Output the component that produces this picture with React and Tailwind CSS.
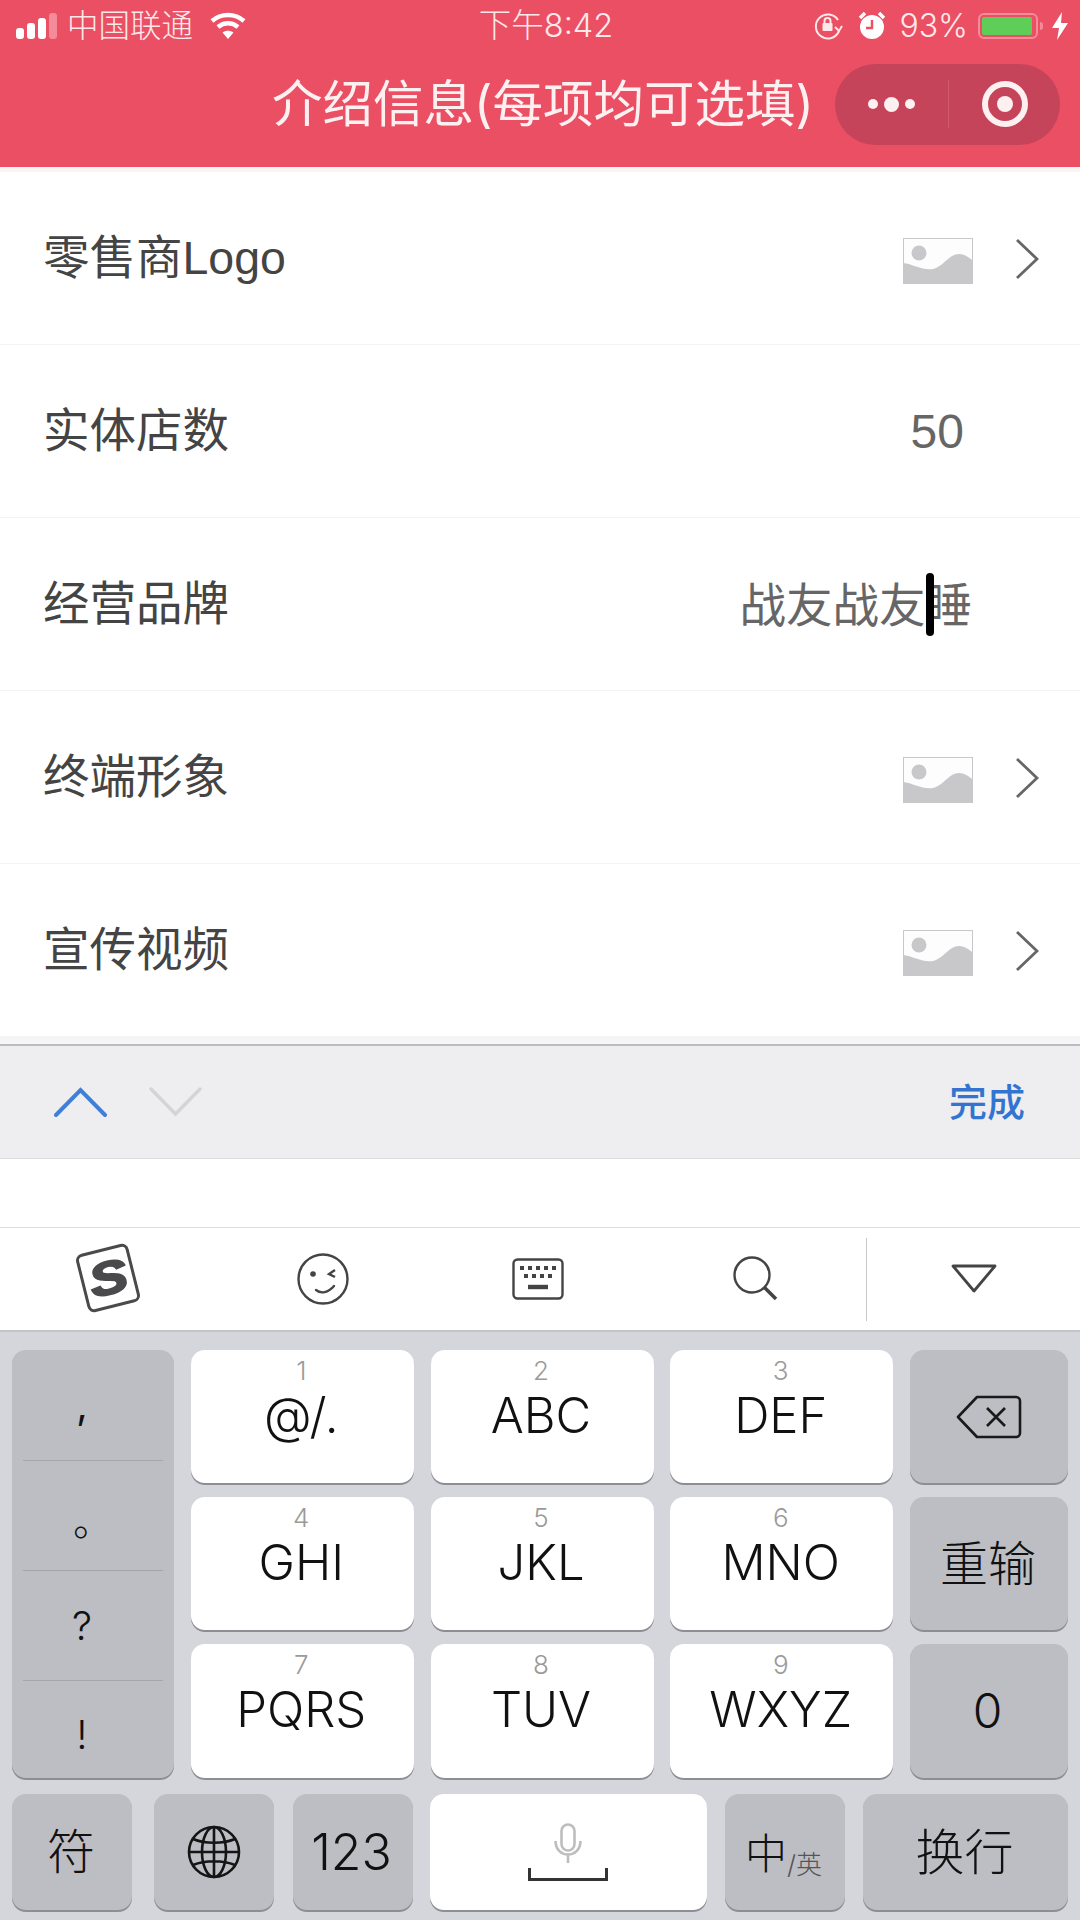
const rows = [
  { label: '零售商Logo', kind: 'image' },
  { label: '实体店数', kind: 'count' },
  { label: '经营品牌', kind: 'brand' },
  { label: '终端形象', kind: 'image' },
  { label: '宣传视频', kind: 'image' },
]

const keys = [
  ['1', '@/.'], ['2', 'ABC'], ['3', 'DEF'],
  ['4', 'GHI'], ['5', 'JKL'], ['6', 'MNO'],
  ['7', 'PQRS'], ['8', 'TUV'], ['9', 'WXYZ'],
]

const grayKey = 'rounded-[14px] bg-[#bdbdc4] shadow-[0_2px_0_#8d8d94] text-[#111]'
const whiteKey = 'rounded-[14px] bg-white shadow-[0_2px_0_#8d8d94] text-[#111]'

function PlaceholderIcon() {
  return (
    <svg className="mt-[5px]" width="70" height="46" viewBox="0 0 70 46">
      <rect x="0.5" y="0.5" width="69" height="45" fill="#fdfdfd" stroke="#c8c8ca" />
      <circle cx="16" cy="15" r="7.5" fill="#c8c8ca" />
      <path d="M0 25 C10 26 20 33 30 31 C40 29 46 16 56 16 C62 16 67 20 70 23 L70 46 L0 46 Z" fill="#c8c8ca" />
    </svg>
  )
}

function Chevron() {
  return (
    <svg className="mt-[2px]" width="24" height="42" viewBox="0 0 24 42" fill="none">
      <path d="M2 2 L22 21 L2 40" stroke="#666" strokeWidth="2.8" />
    </svg>
  )
}

function Row({ label, kind }) {
  return (
    <div className="h-[173px] flex items-center justify-between pl-[43px] border-b border-[#f4f4f7] last:border-b-0">
      <span className="text-[46.5px] text-[#444] font-normal leading-none font-['Liberation_Sans','Noto_Sans_CJK_SC',sans-serif]">{label}</span>
      {kind === 'image' && (
        <div className="flex items-center gap-[42px] pr-[41px]">
          <PlaceholderIcon />
          <Chevron />
        </div>
      )}
      {kind === 'count' && <span className="pr-[116px] pt-[2px] text-[48px] text-[#666] font-['Liberation_Sans',sans-serif] leading-none">50</span>}
      {kind === 'brand' && (
        <span className="relative pr-[108px] pt-[2px] text-[46.5px] text-[#666] font-normal leading-none">
          战友战友睡
          <span className="absolute left-[186px] top-[-7px] w-[8px] h-[63px] rounded-full bg-black" />
        </span>
      )}
    </div>
  )
}

function StatusBar() {
  return (
    <div className="h-[52px] grid grid-cols-[1fr_auto_1fr] items-center pl-[16px] pr-[12px] text-[#fde8ea]">
      <div className="flex items-center">
        <svg width="43" height="28" viewBox="0 0 43 28" fill="#fff">
          <rect x="0" y="16" width="8" height="11" rx="3" />
          <rect x="11" y="11" width="8" height="16" rx="3" />
          <rect x="22" y="6" width="8" height="21" rx="3" />
          <rect x="33" y="1" width="8" height="26" rx="3" fill="#f58b98" />
        </svg>
        <span className="ml-[8px] text-[31.5px] font-light leading-none">中国联通</span>
        <svg className="ml-[17px]" width="36" height="28" viewBox="0 0 36 28" fill="none" stroke="#fff" strokeWidth="4.5">
          <path d="M2 9 C11 1 25 1 34 9" />
          <path d="M8 15 C14 10 22 10 28 15" />
          <path d="M18 27 L12.5 20.5 C15.5 18 20.5 18 23.5 20.5 Z" fill="#fff" stroke="none" />
        </svg>
      </div>
      <span className="text-[32.5px] font-light leading-none pl-[8px]">下午8:42</span>
      <div className="flex items-center justify-end">
        <svg width="30" height="30" viewBox="0 0 30 30" fill="none" stroke="#fde8ea" strokeWidth="2">
          <path d="M25 9 A12 12 0 1 0 26 20" />
          <path d="M22 16 L26 20 L29 15" />
          <rect x="9.5" y="12" width="10" height="8" rx="1" fill="#fde8ea" stroke="none" />
          <path d="M11.5 12 V10 A3 3 0 0 1 17.5 10 V12" />
        </svg>
        <svg className="ml-[15px]" width="28" height="30" viewBox="0 0 28 30">
          <circle cx="14" cy="16" r="12" fill="#fff" />
          <path d="M14 9 V17 H8" fill="none" stroke="#ea4f64" strokeWidth="2.4" />
          <path d="M2 7 L7 2 M26 7 L21 2" stroke="#fff" strokeWidth="3.4" />
        </svg>
        <span className="ml-[13px] text-[32px] font-light leading-none">93%</span>
        <div className="ml-[10px] w-[60px] h-[26px] rounded-[6px] border-2 border-[#f58b98] p-[2px]">
          <div className="w-[50px] h-full rounded-[2px] bg-[#5fce58]" />
        </div>
        <div className="w-[3px] h-[8px] ml-[2px] rounded-r-sm bg-[#f58b98]" />
        <svg className="ml-[9px]" width="16" height="28" viewBox="0 0 16 28" fill="#fff">
          <path d="M10 0 L0 16 H7 L5 28 L16 11 H9 Z" />
        </svg>
      </div>
    </div>
  )
}

function Header() {
  return (
    <div className="h-[167px] bg-[#ea4f64]">
      <StatusBar />
      <div className="h-[104px] flex items-center">
        <span className="ml-[272px] text-[50.5px] leading-none text-[#fdf0f1] font-normal whitespace-nowrap">介绍信息(每项均可选填)</span>
        <div className="ml-auto mr-[20px] w-[225px] h-[81px] rounded-full bg-[#c6445a] flex items-center">
          <div className="w-[113px] flex items-center justify-center gap-[6px]">
            <span className="w-[10px] h-[10px] rounded-full bg-[#fdf0f1]" />
            <span className="w-[15px] h-[15px] rounded-full bg-[#fdf0f1]" />
            <span className="w-[10px] h-[10px] rounded-full bg-[#fdf0f1]" />
          </div>
          <div className="w-px h-[48px] bg-[#d25a6e]" />
          <div className="flex-1 flex items-center justify-center">
            <span className="w-[46px] h-[46px] rounded-full border-[6px] border-[#fdf0f1] flex items-center justify-center">
              <span className="w-[16px] h-[16px] rounded-full bg-[#fdf0f1]" />
            </span>
          </div>
        </div>
      </div>
    </div>
  )
}

function Toolbar() {
  return (
    <div className="h-[115px] bg-[#eeeef0] border-t-2 border-[#bcbcbe] border-b border-b-[#dcdce0] flex items-center pl-[54px] pr-[55px]">
      <svg width="53" height="30" viewBox="0 0 53 30" fill="none">
        <path d="M2 28 L26.5 3 L51 28" stroke="#3f7fd6" strokeWidth="4" strokeLinecap="round" />
      </svg>
      <svg className="ml-[42px]" width="53" height="30" viewBox="0 0 53 30" fill="none">
        <path d="M2 2 L26.5 27 L51 2" stroke="#d4d4d6" strokeWidth="3.4" strokeLinecap="round" />
      </svg>
      <span className="ml-auto text-[38px] leading-none font-medium text-[#3274d0]">完成</span>
    </div>
  )
}

function CandidateBar() {
  return (
    <div className="h-[105px] bg-white border-t border-[#dedee0] border-b-2 border-b-[#c4c4c8] flex items-center">
      <div className="w-[216px] flex justify-center -translate-y-px">
        <div className="w-[54px] h-[60px] -rotate-[14deg] rounded-[7px] border-[3px] border-[#4a4a4c] flex items-center justify-center overflow-hidden">
          <span className="text-[46px] leading-none font-bold italic text-[#4a4a4c] font-['Liberation_Sans',sans-serif] scale-x-125 [-webkit-text-stroke:2px_#4a4a4c]">S</span>
        </div>
      </div>
      <div className="w-[214px] flex justify-center">
        <svg width="52" height="52" viewBox="0 0 52 52" fill="none" stroke="#444" strokeWidth="2.4">
          <circle cx="26" cy="26" r="24.5" />
          <circle cx="16" cy="21" r="2.8" fill="#444" stroke="none" />
          <path d="M38 17 L32 21 L38 24" />
          <path d="M19 37 C24 41 31 40 37 33" strokeLinecap="round" />
        </svg>
      </div>
      <div className="w-[216px] flex justify-center">
        <svg width="52" height="42" viewBox="0 0 52 42" fill="none">
          <rect x="1.5" y="1.5" width="49" height="39" rx="4" stroke="#444" strokeWidth="2.4" />
          <path d="M8 10 H12 M16 10 H20 M24 10 H28 M32 10 H36 M40 10 H44 M12 18 H16 M20 18 H24 M28 18 H32 M36 18 H40" stroke="#444" strokeWidth="4" />
          <path d="M16 29 H36" stroke="#444" strokeWidth="4.4" />
        </svg>
      </div>
      <div className="w-[220px] flex justify-center">
        <svg width="46" height="46" viewBox="0 0 46 46" fill="none" stroke="#444">
          <circle cx="19" cy="19" r="17.5" strokeWidth="2.4" />
          <path d="M31 31 L43 43" strokeWidth="3.6" />
        </svg>
      </div>
      <div className="self-center w-px h-[83px] bg-[#c8c8ca]" />
      <div className="flex-1 flex justify-center">
        <svg width="46" height="30" viewBox="0 0 46 30" fill="none">
          <path d="M2 2 H44 L23 27 Z" stroke="#444" strokeWidth="2.8" strokeLinejoin="round" />
        </svg>
      </div>
    </div>
  )
}

function DigitKey({ digit, letters }) {
  return (
    <div className={`${whiteKey} flex flex-col items-center pt-[8px] pr-[2px] font-light`}>
      <span className="text-[26px] leading-[26px] text-[#9a9a9a]">{digit}</span>
      <span className="mt-[7px] text-[49px] leading-[50px]">{letters}</span>
    </div>
  )
}

function SymbolKey() {
  const items = [
    ['h-[111px]', ',', 'pr-[22px] font-normal'],
    ['h-[110px]', '。', 'pt-[12px]'],
    ['h-[110px]', '?', 'pr-[22px]'],
    ['h-[97px]', '!', 'pt-[10px] pr-[22px]'],
  ]
  return (
    <div className={`${grayKey} row-span-3 flex flex-col px-[11px] font-light`}>
      {items.map(([h, s, pad], i) => (
        <div key={s} className={`${h} ${pad} flex items-center justify-center text-[40px] leading-none ${i < 3 ? 'border-b border-[#a5a5ab]' : ''}`}>
          {s}
        </div>
      ))}
    </div>
  )
}

function Keyboard() {
  return (
    <div className="h-[589px] bg-[#d5d6dc] px-[12px] pt-[18px]">
      <div className="grid grid-cols-[162px_223px_223px_223px_158px] grid-rows-[133px_133px_134px] gap-x-[16.75px] gap-y-[14px]">
        <SymbolKey />
        <DigitKey digit={keys[0][0]} letters={keys[0][1]} />
        <DigitKey digit={keys[1][0]} letters={keys[1][1]} />
        <DigitKey digit={keys[2][0]} letters={keys[2][1]} />
        <div className={`${grayKey} flex items-center justify-center`}>
          <svg width="66" height="44" viewBox="0 0 66 44" fill="none" stroke="#1a1a1a" strokeWidth="2.6" strokeLinejoin="round">
            <path d="M2 22 L21 2 H60 A4 4 0 0 1 64 6 V38 A4 4 0 0 1 60 42 H21 Z" />
            <path d="M31 13 L49 31 M49 13 L31 31" />
          </svg>
        </div>
        <DigitKey digit={keys[3][0]} letters={keys[3][1]} />
        <DigitKey digit={keys[4][0]} letters={keys[4][1]} />
        <DigitKey digit={keys[5][0]} letters={keys[5][1]} />
        <div className={`${grayKey} flex items-center justify-center pr-[2px] text-[48px] font-light leading-none`}>重输</div>
        <DigitKey digit={keys[6][0]} letters={keys[6][1]} />
        <DigitKey digit={keys[7][0]} letters={keys[7][1]} />
        <DigitKey digit={keys[8][0]} letters={keys[8][1]} />
        <div className={`${grayKey} flex items-center justify-center pr-[3px] text-[48px] font-light leading-none`}>0</div>
      </div>
      <div className="mt-[16px] h-[116px] flex">
        <div className={`${grayKey} w-[120px] flex items-center justify-center pr-[2px] text-[48px] font-light leading-none`}>符</div>
        <div className={`${grayKey} ml-[22px] w-[120px] flex items-center justify-center`}>
          <svg width="54" height="54" viewBox="0 0 54 54" fill="none" stroke="#151515" strokeWidth="2.6">
            <circle cx="27" cy="27" r="25" />
            <ellipse cx="27" cy="27" rx="12" ry="25" />
            <path d="M27 2 V52 M2 27 H52 M6 14 C18 19 36 19 48 14 M6 40 C18 35 36 35 48 40" />
          </svg>
        </div>
        <div className={`${grayKey} ml-[19px] w-[120px] flex items-center justify-center pr-[3px] text-[50px] font-light leading-none`}>123</div>
        <div className={`${whiteKey} ml-[17px] w-[277px] flex flex-col items-center justify-center pr-[2px]`}>
          <svg width="28" height="40" viewBox="0 0 28 40" fill="none" stroke="#bdbdbf" strokeWidth="2.6">
            <rect x="7.5" y="1.5" width="13" height="26" rx="6.5" />
            <path d="M1.5 18 C1.5 36 26.5 36 26.5 18 M14 32 V40" />
          </svg>
          <svg className="mt-[5px]" width="80" height="13" viewBox="0 0 80 13" fill="none" stroke="#333" strokeWidth="3">
            <path d="M1.5 0 V11.5 H78.5 V0" />
          </svg>
        </div>
        <div className={`${grayKey} ml-[18px] w-[120px] flex items-center justify-center pt-[4px] pr-[3px] leading-none`}>
          <span className="text-[42px] font-light">中</span>
          <span className="mt-[22px] text-[26px] font-light text-[#555]">/英</span>
        </div>
        <div className={`${grayKey} ml-[18px] w-[205px] flex items-center justify-center pr-[2px] text-[49px] font-light leading-none`}>换行</div>
      </div>
    </div>
  )
}

export default function App() {
  return (
    <div className="w-[1080px] h-[1920px] overflow-hidden bg-white font-['Inter','Noto_Sans_CJK_SC',sans-serif]">
      <Header />
      <div className="h-[5px] bg-[#fbf3f4]" />
      {rows.map((r) => (
        <Row key={r.label} {...r} />
      ))}
      <div className="h-[7px] bg-[#f5f5f7]" />
      <Toolbar />
      <div className="h-[68px] bg-white" />
      <CandidateBar />
      <Keyboard />
    </div>
  )
}
